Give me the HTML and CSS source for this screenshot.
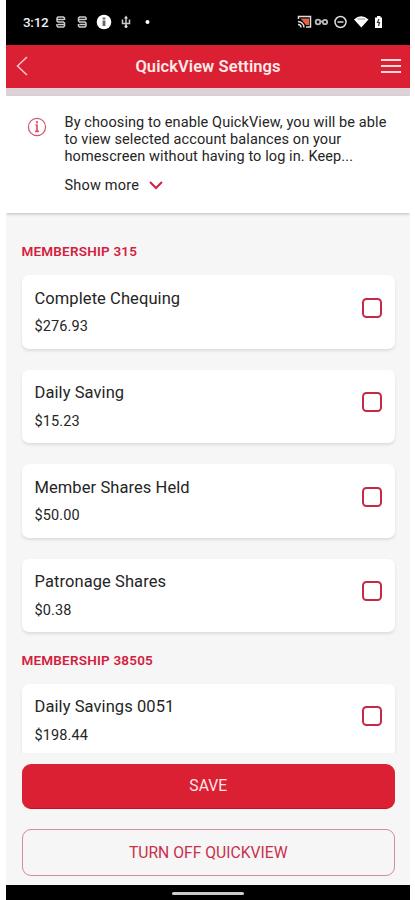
FILE: index.html
```html
<!DOCTYPE html>
<html lang="en">
<head>
<meta charset="utf-8">
<title>QuickView Settings</title>
<link rel="stylesheet" href="styles.css">
</head>
<body>
<div class="phone">
  <div class="status">
    <span class="time">3:12</span>
    <svg class="status-left" width="104" height="16" viewBox="0 0 104 16" fill="none" stroke="#ccc" stroke-width="1.500">
      <path d="M10.500 6V4l-1-1H4L3 4v3l1 1h5.500l1 1v3l-1 1H4l-1-1v-2M3 5.500h7M4 10.500h6"/>
      <path d="M10.500 6V4l-1-1H4L3 4v3l1 1h5.500l1 1v3l-1 1H4l-1-1v-2M3 5.500h7M4 10.500h6" transform="translate(21.500 0)"/>
      <circle cx="50" cy="8" r="7.300" fill="#fff" stroke="none"/>
      <path d="M50 3.500v2M50 6.500v5.500" stroke="#666" stroke-width="2.800"/>
      <path d="M72 3v10M68.500 5.500v4h7v-4"/><path d="M70 4.500L72 1.500l2 3z" fill="#ddd" stroke="none"/><circle cx="72" cy="12.500" r="1.500" fill="#ddd" stroke="none"/>
      <circle cx="93.500" cy="8" r="2" fill="#fff" stroke="none"/>
    </svg>
    <svg class="status-right" width="88" height="16" viewBox="0 0 88 16" fill="none" stroke="#ddd" stroke-width="1.500">
      <path d="M1.500 5V2.500h12v10.500H9"/><path d="M3.500 4.500H12V11H9z" fill="#e65f43" stroke="none"/><path d="M1 7.500a6 6 0 0 1 6 6M1 10.500a3 3 0 0 1 3 3"/>
      <g stroke="#bbb" stroke-width="1.800"><circle cx="21" cy="8" r="2.300"/><path d="M23 7.500h3"/><circle cx="28" cy="8" r="2.200"/></g>
      <circle cx="43.500" cy="8" r="5.500"/><path d="M40.500 8h6"/>
      <path d="M57 5.500Q64-1 71.500 5.500L64.300 13.500z" fill="#fff" stroke="none"/><path d="M60.500 5h7.500" stroke="#888" stroke-width="1"/>
      <path d="M78 3.500h2V2h3.500v1.500H85V14h-7z" fill="#fff" stroke="none"/><path d="M82 5l-1.500 3.500h2L81.500 12" stroke="#333" stroke-width="1.200"/>
    </svg>
  </div>
  <header class="bar">
    <svg width="12" height="20" viewBox="0 0 12 20" fill="none" stroke="#fbc8ca" stroke-width="1.500"><path d="M11 1L1.500 10l9.500 9"/></svg>
    <h1>QuickView Settings</h1>
    <div class="menu"><i></i><i></i><i></i></div>
  </header>
  <div class="strip"></div>
  <section class="info">
    <svg class="info-icon" width="20" height="20" viewBox="0 0 20 20" fill="none" stroke="#d5566a"><circle cx="10" cy="10" r="8.600" stroke-width="1.200"/><path d="M10 4v2.500M10 7.500v7M8.500 8H10M8 14.300h4" stroke-width="1.700"/></svg>
    <div>
      <p>By choosing to enable QuickView, you will be able<br>to view selected account balances on your<br>homescreen without having to log in. Keep...</p>
      <div class="more"><span>Show more</span><svg width="14" height="9" viewBox="0 0 14 9" fill="none" stroke="#cf2340" stroke-width="2"><path d="M1 1l6 6 6-6"/></svg></div>
    </div>
  </section>
  <main class="list">
    <h2>MEMBERSHIP 315</h2>
    <div class="card"><div><div class="name">Complete Chequing</div><div class="amount">$276.93</div></div><span class="check"></span></div>
    <div class="card"><div><div class="name">Daily Saving</div><div class="amount">$15.23</div></div><span class="check"></span></div>
    <div class="card"><div><div class="name">Member Shares Held</div><div class="amount">$50.00</div></div><span class="check"></span></div>
    <div class="card"><div><div class="name">Patronage Shares</div><div class="amount">$0.38</div></div><span class="check"></span></div>
    <h2 class="second">MEMBERSHIP 38505</h2>
    <div class="card"><div><div class="name">Daily Savings 0051</div><div class="amount">$198.44</div></div><span class="check"></span></div>
  </main>
  <footer class="actions">
    <div class="btn save">SAVE</div>
    <div class="btn off">TURN OFF QUICKVIEW</div>
  </footer>
  <div class="nav"><i></i></div>
</div>
</body>
</html>
```
FILE: styles.css
```css
* { box-sizing: border-box; }
body { margin: 0; background: #fff; font-family: Roboto, sans-serif; color: #252525; }
h1, h2, p { margin: 0; }
svg { display: block; flex: none; }
.phone { width: 404px; height: 900px; margin-left: 6px; display: flex; flex-direction: column; background: #f6f6f6; overflow: hidden; }
.phone > * { flex: none; }
.status { height: 44.5px; background: #000; color: #eee; display: flex; align-items: center; padding: 0 25px 0 17px; }
.time { width: 31px; font-size: 13.5px; font-weight: 500; letter-spacing: -.3px; white-space: nowrap; }
.status-right { margin-left: auto; }
.bar { height: 43.5px; background: #da2032; display: flex; align-items: center; justify-content: space-between; padding: 0 9px 0 10px; }
.bar h1 { font-size: 16.5px; font-weight: 600; color: #ffe9e9; white-space: nowrap; letter-spacing: .08px; margin-left: 7px; }
.menu { width: 20px; display: grid; gap: 4px; }
.menu i { height: 2px; background: #ffdada; }
.strip { height: 8px; background: #dcd3d8; }
.info { height: 117px; background: #fff; display: flex; padding: 17.5px 0 0 21px; box-shadow: 0 1px 3px #bbb; }
.info-icon { margin: 3.5px 17.5px 0 0; }
.info p { font-size: 14.5px; line-height: 17px; white-space: nowrap; letter-spacing: .1px; }
.more { display: flex; align-items: center; gap: 10px; margin-top: 11.5px; font-size: 14.5px; line-height: 19px; letter-spacing: .2px; }
.list { height: 540px; padding: 30px 15.5px 0; overflow: hidden; }
.list h2 { font-size: 13.5px; line-height: 16px; font-weight: 600; color: #d3203d; margin-bottom: 16px; letter-spacing: .2px; }
.list h2.second { margin-top: -1.5px; }
.card { height: 73.5px; margin-bottom: 21px; padding: 13.5px 12.5px 0 13px; border-radius: 7px; background: #fff; box-shadow: 0 2px 3px #ddd; display: flex; justify-content: space-between; }
.name { font-size: 16.5px; line-height: 20px; white-space: nowrap; letter-spacing: .08px; }
.amount { font-size: 14.5px; line-height: 18px; margin-top: 9.5px; letter-spacing: .1px; }
.check { width: 20px; height: 20px; margin-top: 9px; border: 2px solid #c42945; border-radius: 4.5px; }
.actions { height: 131.5px; padding: 10.5px 15px 0 15.5px; display: grid; grid-template-rows: 45.5px 47.5px; gap: 19.5px; align-content: start; }
.btn { border-radius: 9px; display: flex; align-items: center; justify-content: center; font-size: 15.7px; }
.save { background: #da2032; color: #ffe6e7; border-bottom: 1px solid #d00b17; }
.off { border: 1px solid #d28c9c; color: #c8304c; }
.nav { height: 15.5px; background: #000; display: flex; justify-content: center; padding-top: 7px; }
.nav i { width: 72px; height: 3px; border-radius: 2px; background: #ccc; }
```
